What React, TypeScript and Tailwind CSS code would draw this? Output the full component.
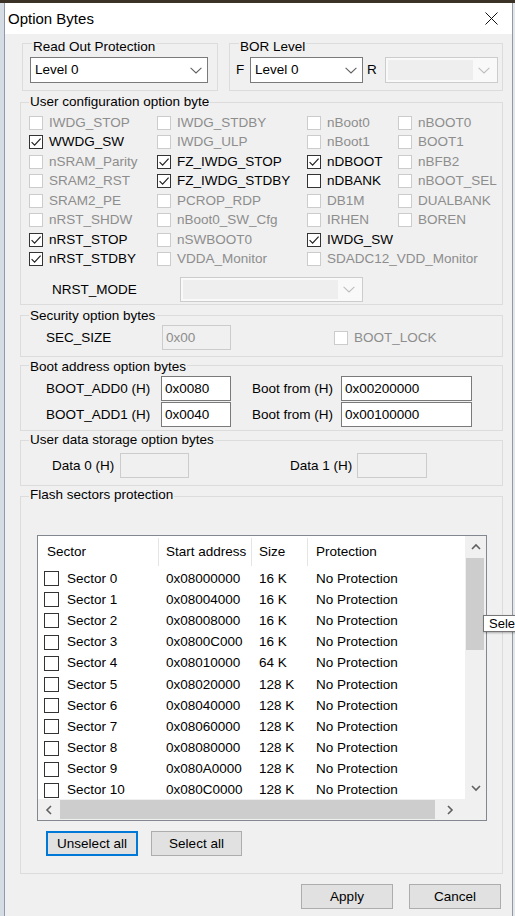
import clsx from "clsx";
import type { ReactNode } from "react";

const GRAY = "text-[#8d8d8d]";

function Check({ checked = false, disabled = false, big = false }: { checked?: boolean; disabled?: boolean; big?: boolean }) {
  return (
    <span
      className={clsx(
        "flex shrink-0 items-center justify-center border bg-white",
        big ? "h-[15px] w-[15px]" : "h-[14px] w-[14px]",
        disabled ? "border-[#cccccc]" : "border-[#333333]",
      )}
    >
      {checked ? (
        <svg width="12" height="12" viewBox="0 0 12 12">
          <path d="M1.6 6.1 4.6 9.1 10.6 2.6" fill="none" stroke="#222" strokeWidth="1.2" />
        </svg>
      ) : null}
    </span>
  );
}

function Chevron({ color = "#606060" }: { color?: string }) {
  return (
    <svg width="12" height="7" viewBox="0 0 12 7" className="shrink-0">
      <path d="M0.6 0.8 6 6 11.4 0.8" fill="none" stroke={color} strokeWidth="1.1" />
    </svg>
  );
}

function Select({ value, className }: { value: string; className?: string }) {
  return (
    <div className={clsx("flex h-[26px] items-center justify-between border border-[#7a7a7a] bg-white pl-[4px] pr-[5px]", className)}>
      <span>{value}</span>
      <Chevron />
    </div>
  );
}

function DeadSelect({ className, fieldWidth }: { className?: string; fieldWidth: string }) {
  return (
    <div className={clsx("flex items-center border border-[#cccccc] bg-[#f9f9f9] p-[2px]", className)}>
      <div className={clsx("h-full bg-[#eeeeee]", fieldWidth)} />
      <div className="flex flex-1 justify-center">
        <Chevron color="#bdbdbd" />
      </div>
    </div>
  );
}

function Field({ value = "", disabled = false, className }: { value?: string; disabled?: boolean; className?: string }) {
  return (
    <div
      className={clsx(
        "flex h-[25px] items-center border pl-[3px]",
        disabled ? "border-[#cccccc] bg-[#f0f0f0] text-[#8d8d8d]" : "border-[#7a7a7a] bg-white",
        className,
      )}
    >
      {value}
    </div>
  );
}

function Group({ label, labelClass, className, children }: { label: string; labelClass: string; className?: string; children?: ReactNode }) {
  return (
    <div className={clsx("relative border border-[#dcdcdc]", className)}>
      <span className={clsx("absolute whitespace-nowrap bg-[#f0f0f0] px-[1px] leading-[16px]", labelClass)}>{label}</span>
      {children}
    </div>
  );
}

type Opt = { label: string; checked?: boolean; disabled?: boolean } | null;

const OPTIONS: Opt[][] = [
  [{ label: "IWDG_STOP", disabled: true }, { label: "IWDG_STDBY", disabled: true }, { label: "nBoot0", disabled: true }, { label: "nBOOT0", disabled: true }],
  [{ label: "WWDG_SW", checked: true }, { label: "IWDG_ULP", disabled: true }, { label: "nBoot1", disabled: true }, { label: "BOOT1", disabled: true }],
  [{ label: "nSRAM_Parity", disabled: true }, { label: "FZ_IWDG_STOP", checked: true }, { label: "nDBOOT", checked: true }, { label: "nBFB2", disabled: true }],
  [{ label: "SRAM2_RST", disabled: true }, { label: "FZ_IWDG_STDBY", checked: true }, { label: "nDBANK" }, { label: "nBOOT_SEL", disabled: true }],
  [{ label: "SRAM2_PE", disabled: true }, { label: "PCROP_RDP", disabled: true }, { label: "DB1M", disabled: true }, { label: "DUALBANK", disabled: true }],
  [{ label: "nRST_SHDW", disabled: true }, { label: "nBoot0_SW_Cfg", disabled: true }, { label: "IRHEN", disabled: true }, { label: "BOREN", disabled: true }],
  [{ label: "nRST_STOP", checked: true }, { label: "nSWBOOT0", disabled: true }, { label: "IWDG_SW", checked: true }, null],
  [{ label: "nRST_STDBY", checked: true }, { label: "VDDA_Monitor", disabled: true }, { label: "SDADC12_VDD_Monitor", disabled: true }, null],
];

const SECTORS = [
  ["Sector 0", "0x08000000", "16 K"],
  ["Sector 1", "0x08004000", "16 K"],
  ["Sector 2", "0x08008000", "16 K"],
  ["Sector 3", "0x0800C000", "16 K"],
  ["Sector 4", "0x08010000", "64 K"],
  ["Sector 5", "0x08020000", "128 K"],
  ["Sector 6", "0x08040000", "128 K"],
  ["Sector 7", "0x08060000", "128 K"],
  ["Sector 8", "0x08080000", "128 K"],
  ["Sector 9", "0x080A0000", "128 K"],
  ["Sector 10", "0x080C0000", "128 K"],
];

function Arrow({ dir }: { dir: "up" | "down" | "left" | "right" }) {
  const d =
    dir === "up" ? "M1 6 5 2 9 6" : dir === "down" ? "M1 2 5 6 9 2" : dir === "left" ? "M6 1 2 5 6 9" : "M2 1 6 5 2 9";
  const size = dir === "up" || dir === "down" ? { width: 10, height: 8, viewBox: "0 0 10 8" } : { width: 8, height: 10, viewBox: "0 0 8 10" };
  return (
    <svg {...size}>
      <path d={d} fill="none" stroke="#606060" strokeWidth="1.6" />
    </svg>
  );
}

function Button({ label, focused, className }: { label: string; focused?: boolean; className?: string }) {
  return (
    <div
      className={clsx(
        "flex h-[25px] items-center justify-center bg-[#e1e1e1]",
        focused ? "border-2 border-[#0078d7]" : "border border-[#adadad]",
        className,
      )}
    >
      {label}
    </div>
  );
}

export default function App() {
  return (
    <div className="relative flex h-[916px] w-[515px] flex-col overflow-hidden bg-[#3a3127] font-['Liberation_Sans',Arial,sans-serif] text-[13.5px] leading-[16px] text-black">
      <div className="h-[3px]" />
      <div className="flex flex-1">
        <div className="w-[4px] bg-[#d5dce4]" />
        <div className="flex w-[509px] flex-col border-x border-[#8d9aaa] bg-[#f0f0f0]">
          {/* title bar */}
          <div className="flex h-[31px] items-center justify-between bg-white pl-[3px] pr-[14px]">
            <span className="text-[15px]">Option Bytes</span>
            <svg width="13" height="13" viewBox="0 0 13 13">
              <path d="M0.5 0.5 12.5 12.5 M12.5 0.5 0.5 12.5" stroke="#111" strokeWidth="1" />
            </svg>
          </div>

          {/* read out + BOR */}
          <div className="mt-[9px] flex">
            <Group label="Read Out Protection" labelClass="left-[9px] top-[-5px]" className="ml-[17px] h-[48px] w-[196px]">
              <Select value="Level 0" className="ml-[7px] mt-[13px] w-[178px]" />
            </Group>
            <Group label="BOR Level" labelClass="left-[9px] top-[-5px]" className="ml-[11px] h-[48px] w-[274px]">
              <div className="mt-[13px] flex h-[26px] items-center">
                <span className="ml-[6px] w-[14px]">F</span>
                <Select value="Level 0" className="w-[113px]" />
                <span className="ml-[4px] w-[18px]">R</span>
                <DeadSelect className="h-[26px] w-[113px]" fieldWidth="w-[85px]" />
              </div>
            </Group>
          </div>

          {/* user configuration */}
          <Group label="User configuration option byte" labelClass="left-[8px] top-[-9px]" className="ml-[15px] mt-[11px] h-[203px] w-[483px]">
            <div className="ml-[8px] mt-[10px] grid grid-cols-[128px_150px_91px_1fr]">
              {OPTIONS.flat().map((o, i) =>
                o ? (
                  <div key={i} className="flex h-[19.5px] items-center gap-[6px] whitespace-nowrap">
                    <Check checked={o.checked} disabled={o.disabled} />
                    <span className={o.disabled ? GRAY : "text-black"}>{o.label}</span>
                  </div>
                ) : (
                  <div key={i} className="h-[19.5px]" />
                ),
              )}
            </div>
            <div className="mt-[8px] flex h-[25px] items-center">
              <span className="ml-[31px] w-[128px]">NRST_MODE</span>
              <DeadSelect className="h-[25px] w-[183px]" fieldWidth="w-[155px]" />
            </div>
          </Group>

          {/* security */}
          <Group label="Security option bytes" labelClass="left-[8px] top-[-8px]" className="ml-[15px] mt-[10px] h-[42px] w-[483px]">
            <div className="mt-[9px] flex h-[25px] items-center">
              <span className="ml-[25px] w-[116px]">SEC_SIZE</span>
              <Field value="0x00" disabled className="w-[69px]" />
              <div className="ml-[103px] flex items-center gap-[6px]">
                <Check disabled />
                <span className={GRAY}>BOOT_LOCK</span>
              </div>
            </div>
          </Group>

          {/* boot address */}
          <Group label="Boot address option bytes" labelClass="left-[8px] top-[-7px]" className="ml-[15px] mt-[8px] h-[66px] w-[483px]">
            <div className="mt-[10px] flex flex-col gap-[1px]">
              {[
                ["BOOT_ADD0 (H)", "0x0080", "0x00200000"],
                ["BOOT_ADD1 (H)", "0x0040", "0x00100000"],
              ].map(([l, v, b]) => (
                <div key={l} className="flex h-[25px] items-center">
                  <span className="ml-[25px] w-[115px]">{l}</span>
                  <Field value={v} className="w-[70px]" />
                  <span className="ml-[21px] w-[89px]">Boot from (H)</span>
                  <Field value={b} className="w-[131px]" />
                </div>
              ))}
            </div>
          </Group>

          {/* user data */}
          <Group label="User data storage option bytes" labelClass="left-[8px] top-[-9px]" className="ml-[15px] mt-[9px] h-[46px] w-[483px]">
            <div className="mt-[12px] flex h-[25px] items-center">
              <span className="ml-[31px] w-[68px]">Data 0 (H)</span>
              <Field disabled className="w-[69px]" />
              <span className="ml-[101px] w-[67px]">Data 1 (H)</span>
              <Field disabled className="w-[70px]" />
            </div>
          </Group>

          {/* flash sectors */}
          <Group label="Flash sectors protection" labelClass="left-[8px] top-[-10px]" className="ml-[15px] mt-[10px] h-[378px] w-[483px]">
            <div className="ml-[16px] mt-[38px] flex h-[286px] w-[450px] flex-col border border-[#828790] bg-white">
              <div className="flex h-[263px]">
                <div className="w-[427px] overflow-hidden">
                  <div className="flex h-[32px] items-center">
                    <span className="w-[120px] pl-[9px]">Sector</span>
                    <span className="h-[28px] w-px bg-[#e5e5e5]" />
                    <span className="w-[92px] pl-[7px]">Start address</span>
                    <span className="h-[28px] w-px bg-[#e5e5e5]" />
                    <span className="w-[55px] pl-[7px]">Size</span>
                    <span className="h-[28px] w-px bg-[#e5e5e5]" />
                    <span className="pl-[8px]">Protection</span>
                  </div>
                  {SECTORS.map(([name, addr, size]) => (
                    <div key={name} className="flex h-[21.2px] items-center whitespace-nowrap">
                      <div className="flex w-[121px] items-center gap-[8px] pl-[6px]">
                        <Check big />
                        <span>{name}</span>
                      </div>
                      <span className="w-[93px] pl-[7px]">{addr}</span>
                      <span className="w-[56px] pl-[7px]">{size}</span>
                      <span className="pl-[8px]">No Protection</span>
                    </div>
                  ))}
                </div>
                <div className="flex w-[21px] flex-col bg-[#f0f0f0]">
                  <div className="flex h-[22px] items-center justify-center">
                    <Arrow dir="up" />
                  </div>
                  <div className="ml-[1px] h-[92px] w-[18px] bg-[#cdcdcd]" />
                  <div className="flex-1" />
                  <div className="flex h-[22px] items-center justify-center">
                    <Arrow dir="down" />
                  </div>
                </div>
              </div>
              <div className="flex h-[21px] bg-[#f0f0f0]">
                <div className="flex w-[22px] items-center justify-center">
                  <Arrow dir="left" />
                </div>
                <div className="my-[1px] w-[375px] bg-[#cdcdcd]" />
                <div className="flex w-[30px] items-center justify-center">
                  <Arrow dir="right" />
                </div>
                <div className="flex-1 bg-[#f0f0f0]" />
              </div>
            </div>
            <div className="mt-[10px] flex">
              <Button label="Unselect all" focused className="ml-[25px] w-[92px]" />
              <Button label="Select all" className="ml-[13px] w-[91px]" />
            </div>
          </Group>

          {/* dialog buttons */}
          <div className="mt-[10px] flex">
            <Button label="Apply" className="ml-[296px] w-[92px]" />
            <Button label="Cancel" className="ml-[16px] w-[92px]" />
          </div>
        </div>
        <div className="flex-1 bg-[#e6e6e6]" />
      </div>

      <div className="absolute left-[483px] top-[615px] flex h-[17px] items-center border border-[#767676] bg-white pl-[5px] text-[13px] shadow-[1px_1px_2px_rgba(0,0,0,0.3)]">
        Sele
      </div>
    </div>
  );
}
